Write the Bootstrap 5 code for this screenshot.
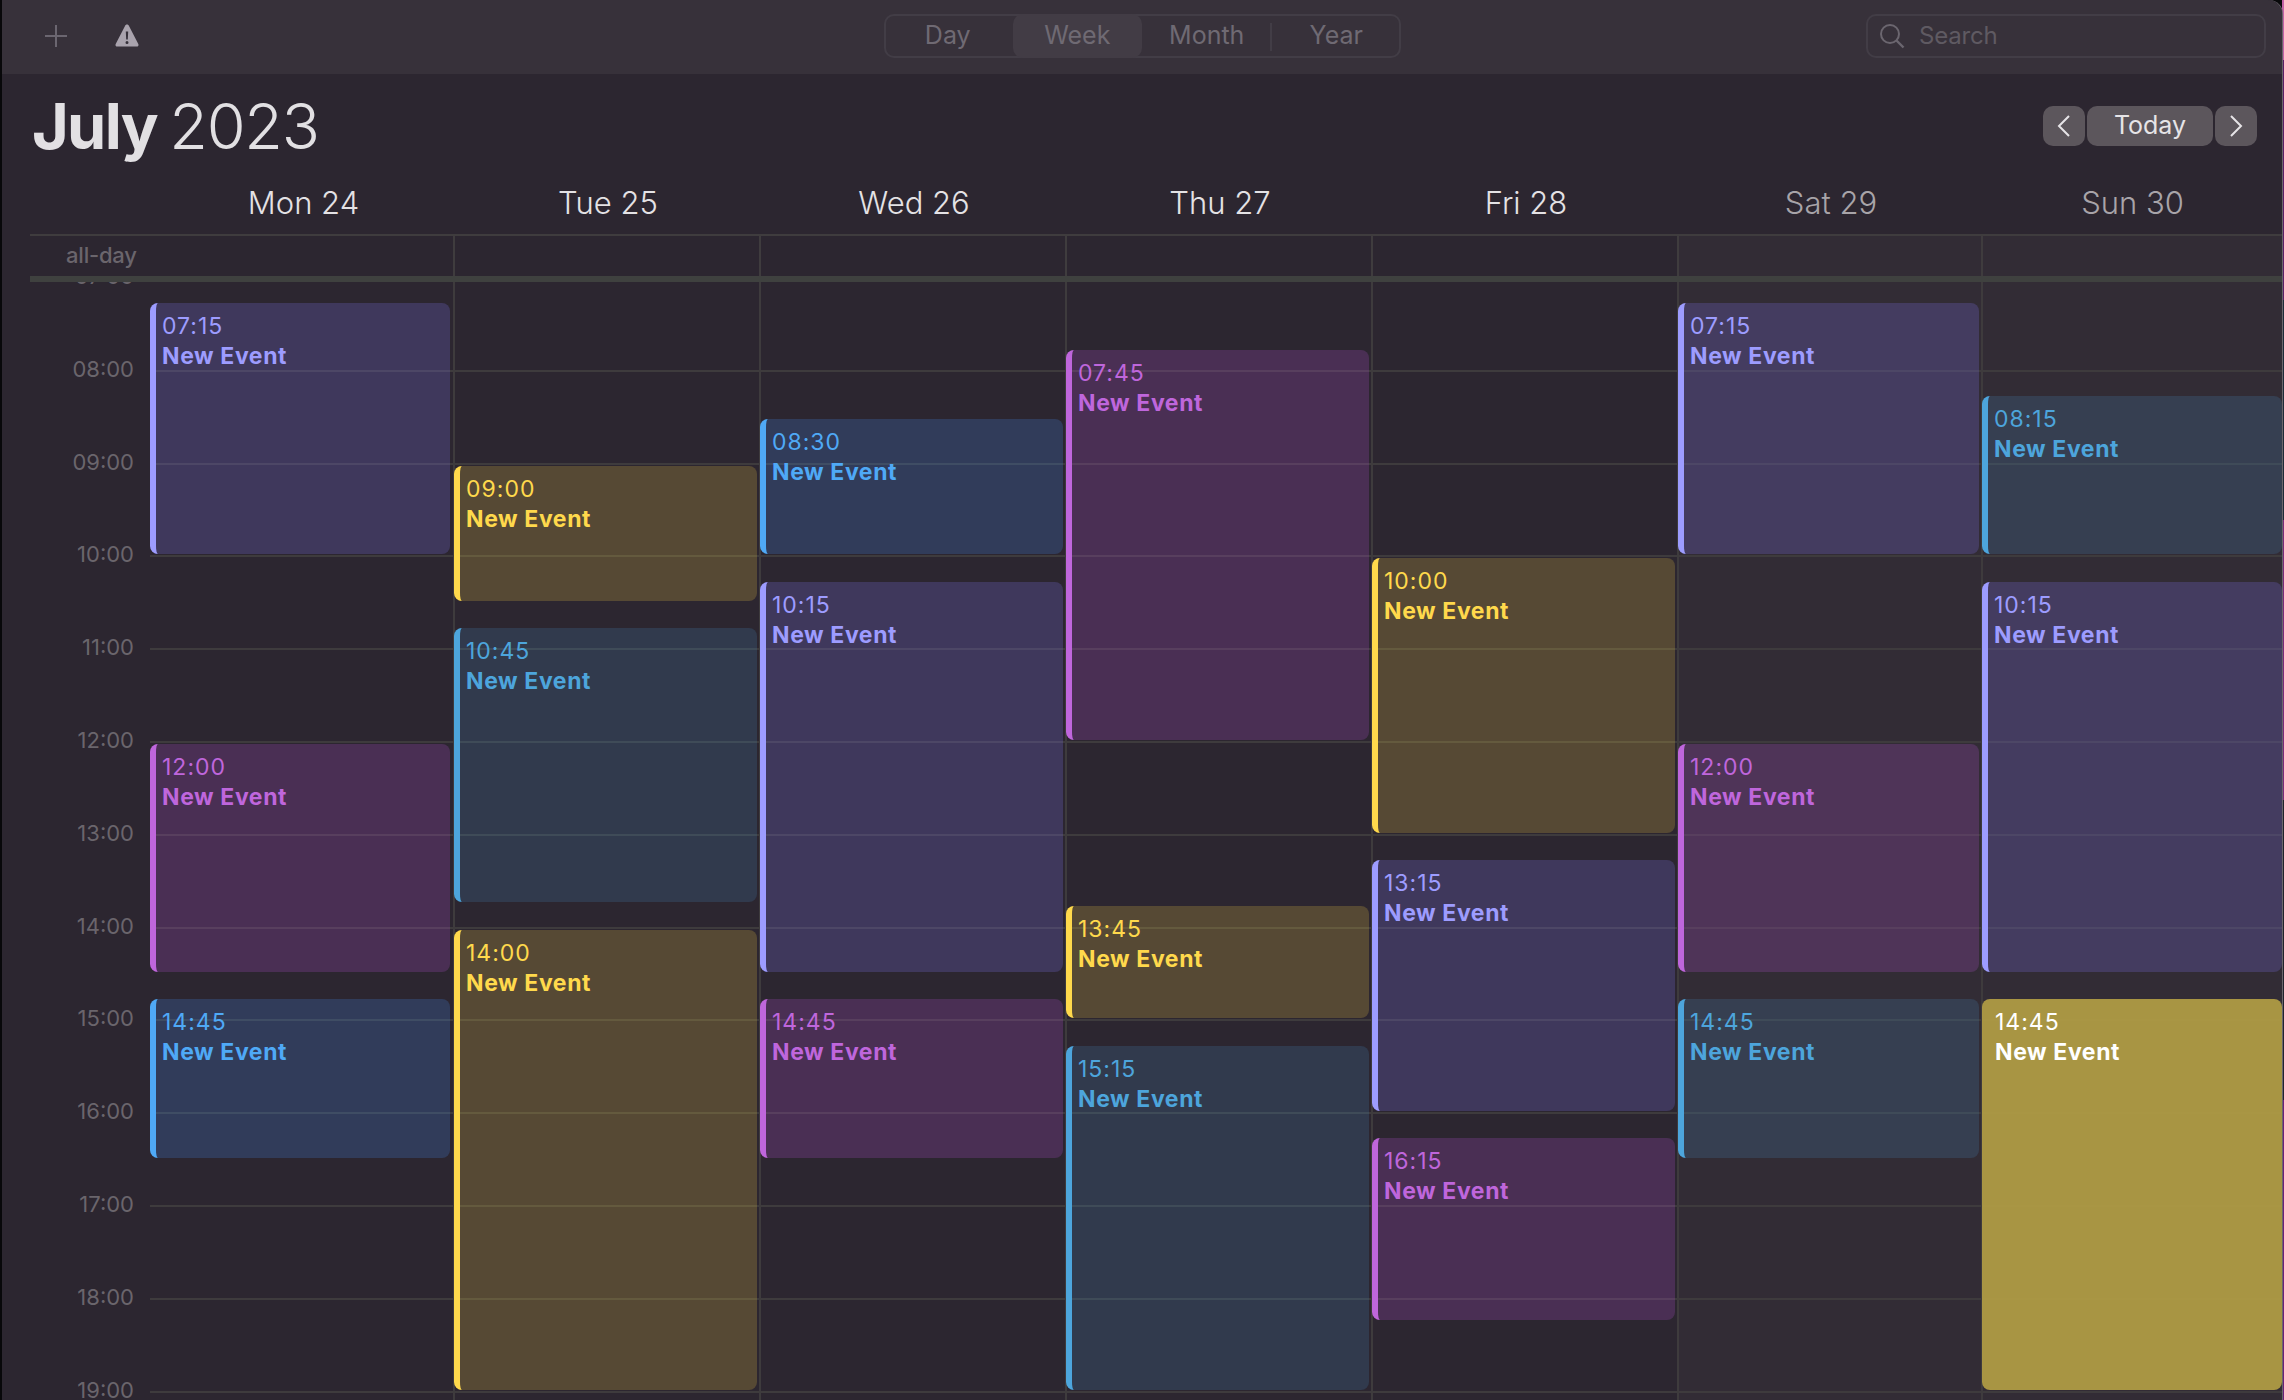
<!doctype html>
<html lang="en"><head><meta charset="utf-8"><title>Calendar</title>
<link rel="stylesheet" href="https://cdn.jsdelivr.net/npm/bootstrap@5.3.0/dist/css/bootstrap.min.css">
<style>
html,body{height:100%;overflow:hidden}
body{background:linear-gradient(90deg,#08080a 0 2282px,transparent 2282px),linear-gradient(#c463a8 0 60px,#5a1f66 60px 300px,#1d2a38 300px 520px,#7a2a7a 520px 800px,#20222c 800px 1100px,#6a1f78 1100px);font-family:Inter,"Liberation Sans",sans-serif;color:#e4e2e5}
.win{position:relative;width:2280px;height:1400px;margin-left:2px;background:#2c2630;border-top-right-radius:14px;overflow:hidden;box-shadow:1px 0 0 #6a676c}
.tb{height:74px;background:#37313a;padding:0 16px 3px 42px}
.tb-left{width:840px}
.tb-left svg+svg{margin-left:47px}
.seg{width:517px;height:44px;border:2px solid #423d46;border-radius:10px;color:#6f6a73;font-size:25px}
.seg>div{flex:0 0 129.5px;display:flex;align-items:center;justify-content:center;position:relative}
.seg>div:first-child{margin-left:-3px}
.seg .on{background:#423c45;border-radius:10px;margin:-2px 0;height:44px}
.seg .dv::after{content:"";position:absolute;right:0;top:7px;height:28px;width:2px;background:#423d46}
.srch{margin-left:auto;width:400px;height:44px;border:2px solid #423d46;border-radius:10px;color:#5f5a62;font-size:24px;letter-spacing:-.2px;padding-left:11px;gap:14px}
.hd{height:156px;padding-left:30px}
.title{font-size:63px;line-height:76px;font-weight:300;letter-spacing:-1.3px;word-spacing:-4px;color:#e2e0e3;padding-top:14px;margin:0}
.title b{font-weight:700;letter-spacing:-1.7px}
.nb{height:40px;background:#5c565c;border:0;border-radius:10px;color:#e6e4e7;font-size:25px;padding:0}
.nb.sq{width:42px}.nb.tw{width:126px}
.navs{gap:2px;margin:32px 25px 0 0}
.heads{margin:-47px 0 11px 150px}
.dn{text-align:center;font-size:31px;font-weight:300;line-height:40px;color:#e4e2e5}
.dn.we{color:#a8a4a9}
.c1{flex:0 0 303px}.cn{flex:0 0 306px}.cn.we{flex-basis:304px}.cl{flex:1 1 0}
.ad{height:48px;margin-left:28px;border-top:2px solid #3f3c3e;border-bottom:6px solid #3f413f;display:flex}
.gut{flex:0 0 120px;font-size:22px;color:#6a656c;font-weight:500;padding-left:36px;padding-top:3px;letter-spacing:-.2px}
.ad .c{border-left:2px solid #3f3c3e}
.ad .c.c1{border-left:0}
.ad .we{background:#322c35}
.main{height:1118px;overflow:hidden;margin-left:28px}
.inner{margin-top:-5px;display:flex;position:relative}
.labels{flex:0 0 120px;margin-top:-1px}
.lb{height:92.8px;font-size:22px;color:#6a656c;text-align:right;padding-right:16px;line-height:0}
.day{position:relative;border-left:2px solid #3e3b3d}
.day.c1{border-left:0}
.day.we{background:#322c35}
.sl{height:92.8px;border-top:2px solid #3e3b3d}
.ev{position:absolute;left:-1px;right:2.500px;top:calc(var(--s)*92.8px + 3px);height:calc(var(--d)*92.8px - 4px);border-radius:8px;overflow:hidden;padding:8px 0 0 6px;font-size:23px;line-height:30px;letter-spacing:1px;border-left:6px solid var(--f);background:var(--b);color:var(--f)}
.c1 .ev{left:0;right:3px}
.cl .ev{right:0}
.ev b{display:block;font-weight:700;letter-spacing:.6px}
.i{--f:#9d9cff;--b:rgba(120,110,220,.26)}
.p{--f:#bf66dc;--b:rgba(170,80,200,.24)}
.y{--f:#ffd94c;--b:rgba(255,215,70,.2)}
.bl{--f:#4fa9f6;--b:rgba(70,140,240,.22)}
.t{--f:#4da5dc;--b:rgba(70,150,210,.18)}
.ev.solid{--f:#fff;--b:rgba(175,155,68,.95);border-left:0;padding-left:13px}
</style></head><body>
<div class="win">
<div class="tb d-flex align-items-center">
<div class="tb-left d-flex align-items-center">
<svg width="24" height="24" viewBox="0 0 24 24"><path d="M12 1v22M1 12h22" stroke="#6b6670" stroke-width="2" fill="none"/></svg>
<svg width="24" height="23" viewBox="0 0 24 23"><path d="M12 0.500c1 0 1.600.6 2 1.400l9.300 18c.7 1.300-.1 2.600-1.700 2.600H2.400c-1.600 0-2.400-1.300-1.700-2.600l9.300-18c.4-.8 1-1.400 2-1.400z" fill="#a9a3ad"/><path d="M10.800 7.500h2.400l-.4 8h-1.600zM12 17a1.500 1.500 0 1 1 0 3 1.500 1.500 0 0 1 0-3z" fill="#36313a"/></svg>
</div>
<div class="seg d-flex"><div>Day</div><div class="on">Week</div><div class="dv">Month</div><div>Year</div></div>
<div class="srch d-flex align-items-center"><svg width="26" height="26" viewBox="0 0 26 26"><circle cx="11" cy="11" r="9" stroke="#6b666f" stroke-width="2" fill="none"/><path d="M17.500 17.500l7 7" stroke="#6b666f" stroke-width="2.400" fill="none"/></svg><span>Search</span></div>
</div>
<div class="hd d-flex justify-content-between align-items-start">
<h1 class="title"><b>July</b> 2023</h1>
<div class="navs d-flex">
<button class="nb sq d-flex align-items-center justify-content-center"><svg width="14" height="24" viewBox="0 0 14 24"><path d="M12 2L2 12l10 10" stroke="#e6e4e7" stroke-width="2" fill="none"/></svg></button>
<button class="nb tw">Today</button>
<button class="nb sq d-flex align-items-center justify-content-center"><svg width="14" height="24" viewBox="0 0 14 24"><path d="M2 2l10 10L2 22" stroke="#e6e4e7" stroke-width="2" fill="none"/></svg></button>
</div>
</div>
<div class="heads d-flex">
<div class="dn c1">Mon 24</div><div class="dn cn">Tue 25</div><div class="dn cn">Wed 26</div><div class="dn cn">Thu 27</div><div class="dn cn">Fri 28</div><div class="dn cn we">Sat 29</div><div class="dn cl we">Sun 30</div>
</div>
<div class="ad"><div class="gut">all-day</div><div class="c c1"></div><div class="c cn"></div><div class="c cn"></div><div class="c cn"></div><div class="c cn"></div><div class="c cn we"></div><div class="c cl we"></div></div>
<div class="main"><div class="inner">
<div class="labels"><div class="lb">07:00</div><div class="lb">08:00</div><div class="lb">09:00</div><div class="lb">10:00</div><div class="lb">11:00</div><div class="lb">12:00</div><div class="lb">13:00</div><div class="lb">14:00</div><div class="lb">15:00</div><div class="lb">16:00</div><div class="lb">17:00</div><div class="lb">18:00</div><div class="lb">19:00</div></div>
<div class="day c1">
<div class="sl"></div><div class="sl"></div><div class="sl"></div><div class="sl"></div><div class="sl"></div><div class="sl"></div><div class="sl"></div><div class="sl"></div><div class="sl"></div><div class="sl"></div><div class="sl"></div><div class="sl"></div><div class="sl"></div>
<div class="ev i" style="--s:.25;--d:2.75">07:15<b>New Event</b></div>
<div class="ev p" style="--s:5;--d:2.5">12:00<b>New Event</b></div>
<div class="ev bl" style="--s:7.75;--d:1.75">14:45<b>New Event</b></div>
</div>
<div class="day cn">
<div class="sl"></div><div class="sl"></div><div class="sl"></div><div class="sl"></div><div class="sl"></div><div class="sl"></div><div class="sl"></div><div class="sl"></div><div class="sl"></div><div class="sl"></div><div class="sl"></div><div class="sl"></div><div class="sl"></div>
<div class="ev y" style="--s:2;--d:1.5">09:00<b>New Event</b></div>
<div class="ev t" style="--s:3.75;--d:3">10:45<b>New Event</b></div>
<div class="ev y" style="--s:7;--d:5">14:00<b>New Event</b></div>
</div>
<div class="day cn">
<div class="sl"></div><div class="sl"></div><div class="sl"></div><div class="sl"></div><div class="sl"></div><div class="sl"></div><div class="sl"></div><div class="sl"></div><div class="sl"></div><div class="sl"></div><div class="sl"></div><div class="sl"></div><div class="sl"></div>
<div class="ev bl" style="--s:1.5;--d:1.5">08:30<b>New Event</b></div>
<div class="ev i" style="--s:3.25;--d:4.25">10:15<b>New Event</b></div>
<div class="ev p" style="--s:7.75;--d:1.75">14:45<b>New Event</b></div>
</div>
<div class="day cn">
<div class="sl"></div><div class="sl"></div><div class="sl"></div><div class="sl"></div><div class="sl"></div><div class="sl"></div><div class="sl"></div><div class="sl"></div><div class="sl"></div><div class="sl"></div><div class="sl"></div><div class="sl"></div><div class="sl"></div>
<div class="ev p" style="--s:.75;--d:4.25">07:45<b>New Event</b></div>
<div class="ev y" style="--s:6.75;--d:1.25">13:45<b>New Event</b></div>
<div class="ev t" style="--s:8.25;--d:3.75">15:15<b>New Event</b></div>
</div>
<div class="day cn">
<div class="sl"></div><div class="sl"></div><div class="sl"></div><div class="sl"></div><div class="sl"></div><div class="sl"></div><div class="sl"></div><div class="sl"></div><div class="sl"></div><div class="sl"></div><div class="sl"></div><div class="sl"></div><div class="sl"></div>
<div class="ev y" style="--s:3;--d:3">10:00<b>New Event</b></div>
<div class="ev i" style="--s:6.25;--d:2.75">13:15<b>New Event</b></div>
<div class="ev p" style="--s:9.25;--d:2">16:15<b>New Event</b></div>
</div>
<div class="day cn we">
<div class="sl"></div><div class="sl"></div><div class="sl"></div><div class="sl"></div><div class="sl"></div><div class="sl"></div><div class="sl"></div><div class="sl"></div><div class="sl"></div><div class="sl"></div><div class="sl"></div><div class="sl"></div><div class="sl"></div>
<div class="ev i" style="--s:.25;--d:2.75">07:15<b>New Event</b></div>
<div class="ev p" style="--s:5;--d:2.5">12:00<b>New Event</b></div>
<div class="ev t" style="--s:7.75;--d:1.75">14:45<b>New Event</b></div>
</div>
<div class="day cl we">
<div class="sl"></div><div class="sl"></div><div class="sl"></div><div class="sl"></div><div class="sl"></div><div class="sl"></div><div class="sl"></div><div class="sl"></div><div class="sl"></div><div class="sl"></div><div class="sl"></div><div class="sl"></div><div class="sl"></div>
<div class="ev t" style="--s:1.25;--d:1.75">08:15<b>New Event</b></div>
<div class="ev i" style="--s:3.25;--d:4.25">10:15<b>New Event</b></div>
<div class="ev y solid" style="--s:7.75;--d:4.25">14:45<b>New Event</b></div>
</div>
</div></div>
</div>
</body></html>
